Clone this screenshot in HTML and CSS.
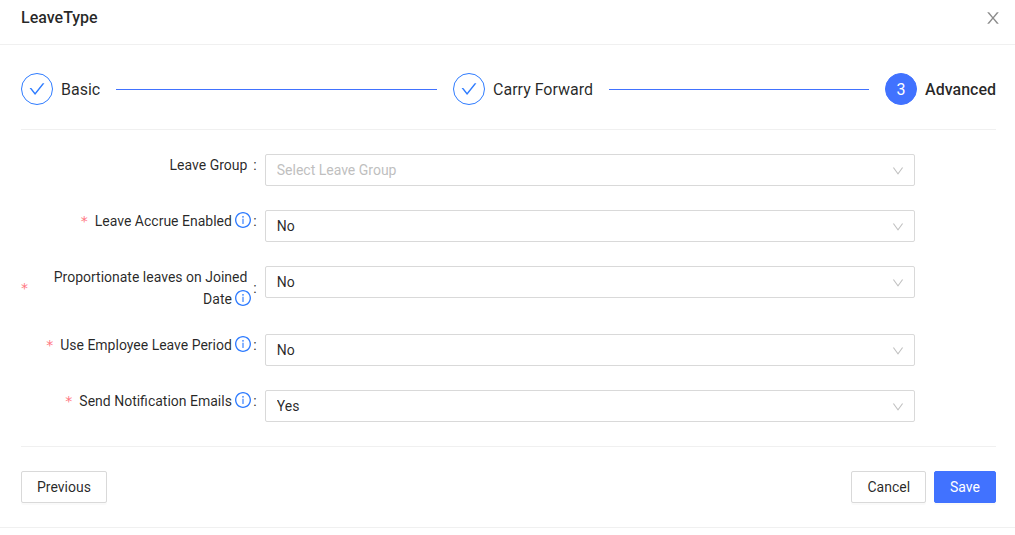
FILE: index.html
```html
<!DOCTYPE html>
<html lang="en">
<head>
<meta charset="utf-8">
<title>LeaveType</title>
<link rel="stylesheet" href="styles.css">
</head>
<body>
<svg class="sprite" aria-hidden="true">
  <symbol id="check" viewBox="64 64 896 896"><path d="M912 190h-69.900c-9.800 0-19.100 4.500-25.100 12.200L404.700 724.500 207 474a32 32 0 0 0-25.100-12.200H112c-6.700 0-10.400 7.700-6.300 12.900l273.900 347c12.800 16.200 37.400 16.200 50.300 0l488.400-618.900c4.100-5.100.4-12.800-6.300-12.800z"/></symbol>
  <symbol id="info" viewBox="64 64 896 896"><path d="M512 64C264.600 64 64 264.600 64 512s200.600 448 448 448 448-200.600 448-448S759.400 64 512 64zm0 820c-205.400 0-372-166.600-372-372s166.600-372 372-372 372 166.600 372 372-166.600 372-372 372z"/><path d="M464 336a48 48 0 1 0 96 0 48 48 0 1 0-96 0zm72 112h-48c-4.400 0-8 3.600-8 8v272c0 4.400 3.600 8 8 8h48c4.400 0 8-3.600 8-8V456c0-4.400-3.600-8-8-8z"/></symbol>
  <symbol id="close" viewBox="64 64 896 896"><path d="M563.800 512l262.500-312.900c4.400-5.200.7-13.100-6.100-13.100h-79.800c-4.700 0-9.200 2.100-12.300 5.700L511.600 449.800 295.100 191.700c-3-3.600-7.500-5.700-12.300-5.700H203c-6.800 0-10.500 7.900-6.100 13.100L459.400 512 196.900 824.900A7.950 7.950 0 0 0 203 838h79.800c4.700 0 9.200-2.100 12.300-5.700l216.500-258.100 216.500 258.100c3 3.600 7.500 5.700 12.300 5.700h79.800c6.800 0 10.500-7.900 6.100-13.100L563.800 512z"/></symbol>
  <symbol id="down" viewBox="64 64 896 896"><path d="M884 256h-75c-5.100 0-9.900 2.500-12.900 6.600L512 654.200 227.900 262.600c-3-4.100-7.800-6.600-12.900-6.600h-75c-6.500 0-10.300 7.400-6.500 12.700l352.600 486.100c12.800 17.600 39 17.600 51.700 0l352.600-486.100c3.900-5.300.1-12.700-6.400-12.700z"/></symbol>
</svg>
<main class="dialog">
  <header class="dialog-header">
    <h1 class="dialog-title">LeaveType</h1>
    <button class="close" type="button" aria-label="Close"><svg class="close-icon"><use href="#close"/></svg></button>
  </header>
  <form class="dialog-body">
    <ol class="steps">
      <li class="step"><span class="step-icon"><svg class="check-icon"><use href="#check"/></svg></span><span class="step-title">Basic</span></li>
      <li class="step"><span class="step-icon"><svg class="check-icon"><use href="#check"/></svg></span><span class="step-title">Carry Forward</span></li>
      <li class="step step-active" aria-current="step"><span class="step-icon"><span class="step-number">3</span></span><span class="step-title">Advanced</span></li>
    </ol>
    <hr class="divider">
    <div class="fields">
      <div class="field">
        <label class="label" for="group"><span class="label-text">Leave Group</span></label>
        <div class="control"><select class="select placeholder" id="group"><option>Select Leave Group</option></select><svg class="arrow"><use href="#down"/></svg></div>
      </div>
      <div class="field">
        <label class="label required" for="accrue"><span class="label-text">Leave Accrue Enabled <svg class="info-icon"><use href="#info"/></svg></span></label>
        <div class="control"><select class="select" id="accrue"><option>No</option><option>Yes</option></select><svg class="arrow"><use href="#down"/></svg></div>
      </div>
      <div class="field">
        <label class="label required" for="joined"><span class="label-text">Proportionate leaves on Joined Date <svg class="info-icon"><use href="#info"/></svg></span></label>
        <div class="control"><select class="select" id="joined"><option>No</option><option>Yes</option></select><svg class="arrow"><use href="#down"/></svg></div>
      </div>
      <div class="field">
        <label class="label required" for="period"><span class="label-text">Use Employee Leave Period <svg class="info-icon"><use href="#info"/></svg></span></label>
        <div class="control"><select class="select" id="period"><option>No</option><option>Yes</option></select><svg class="arrow"><use href="#down"/></svg></div>
      </div>
      <div class="field">
        <label class="label required" for="emails"><span class="label-text">Send Notification Emails <svg class="info-icon"><use href="#info"/></svg></span></label>
        <div class="control"><select class="select" id="emails"><option>Yes</option><option>No</option></select><svg class="arrow"><use href="#down"/></svg></div>
      </div>
    </div>
    <hr class="divider">
    <div class="actions">
      <button class="button" type="button">Previous</button>
      <div class="actions-end">
        <button class="button" type="button">Cancel</button>
        <button class="button button-primary" type="button">Save</button>
      </div>
    </div>
  </form>
</main>
</body>
</html>
```
FILE: styles.css
```css
* { box-sizing: border-box; }
body {
  margin: 0;
  background: #fff;
  color: rgba(0, 0, 0, 0.85);
  font: 14px/22px Roboto, "Liberation Sans", sans-serif;
}
svg { fill: currentColor; }
.sprite { display: none; }
.dialog { border-bottom: 1px solid #f0f0f0; }
.dialog-header {
  display: flex;
  align-items: center;
  justify-content: space-between;
  padding: 7px 14px 15px 21px;
  border-bottom: 1px solid #f0f0f0;
}
.dialog-title { margin: 0; font-size: 16px; line-height: 22px; font-weight: 500; }
.close {
  display: flex;
  padding: 0;
  border: 0;
  background: none;
  color: rgba(0, 0, 0, 0.45);
}
.close-icon { width: 16px; height: 16px; }
.dialog-body { padding: 28px 19px 24px 21px; }
.steps {
  display: flex;
  gap: 16px;
  margin: 0;
  padding: 0;
  list-style: none;
  font-size: 16px;
  line-height: 30px;
}
.step { display: flex; flex: 1; align-items: center; gap: 8px; white-space: nowrap; }
.step:not(:last-child)::after {
  content: "";
  flex: 1;
  height: 1px;
  margin-left: 8px;
  background: #4172ff;
}
.step:last-child { flex: none; }
.step-title, .step-number { padding-top: 2px; }
.step-icon {
  display: flex;
  align-items: center;
  justify-content: center;
  width: 32px;
  height: 32px;
  border: 1px solid #2f7cff;
  border-radius: 50%;
  color: #2f7cff;
}
.check-icon { width: 16px; height: 16px; }
.step-active { font-weight: 500; }
.step-active .step-icon { border-color: #4172ff; background: #4172ff; color: #fff; font-weight: 400; }
.divider { height: 1px; margin: 24px 0; border: 0; background: #f0f0f0; }
.fields { display: grid; gap: 24px; }
.field {
  display: grid;
  grid-template-columns: 3fr 8fr 1fr;
  align-items: start;
}
.label {
  display: flex;
  align-items: center;
  justify-content: flex-end;
  text-align: right;
}
.label::after { content: ":"; margin: 0 8px 0 6px; }
.required::before { content: "*"; margin-right: 7px; color: #ff7580; font-family: "DejaVu Sans", sans-serif; }
.info-icon { width: 16px; height: 16px; margin-right: -4px; color: #2f7cff; vertical-align: -2px; }
.control { display: grid; align-items: center; }
.select {
  grid-area: 1 / 1;
  width: 100%;
  height: 32px;
  padding: 0 11px;
  border: 1px solid #d9d9d9;
  border-radius: 2px;
  background: #fff;
  color: inherit;
  font: inherit;
  appearance: none;
}
.placeholder { color: #bfbfbf; }
.arrow {
  grid-area: 1 / 1;
  justify-self: end;
  width: 12px;
  height: 12px;
  margin: 2px 11px 0 0;
  color: rgba(0, 0, 0, 0.25);
  pointer-events: none;
}
.actions, .actions-end { display: flex; gap: 8px; }
.actions { justify-content: space-between; }
.button {
  height: 32px;
  padding: 4px 15px;
  border: 1px solid #d9d9d9;
  border-radius: 2px;
  background: #fff;
  box-shadow: 0 2px 0 rgba(0, 0, 0, 0.02);
  color: inherit;
  font: inherit;
}
.button-primary { border-color: #4172ff; background: #4172ff; color: #fff; }
```
